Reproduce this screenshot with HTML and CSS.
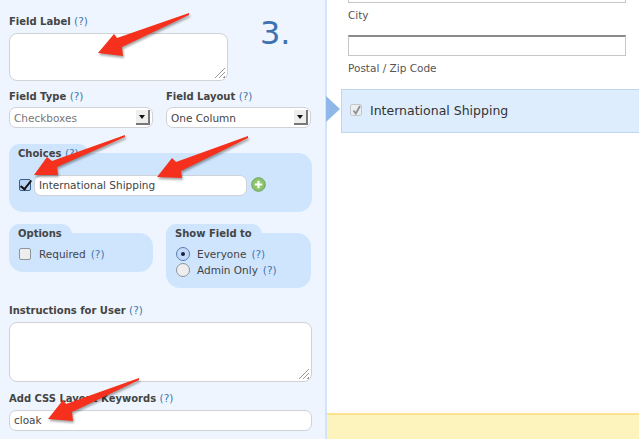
FILE: index.html
```html
<!DOCTYPE html>
<html lang="en">
<head>
	<meta charset="UTF-8">
	<title>Field Settings</title>
	<link rel="stylesheet" href="styles.css">
</head>
<body>
	<div id="page">
		<div class="side">
			<div class="top_row">
				<div class="label_block">
					<div class="lab">Field Label <span class="help">(?)</span></div>
					<div class="area area_short"><span class="grip"></span></div>
				</div>
				<div class="step">3.</div>
			</div>
			<div class="two_col selects">
				<div class="col">
					<div class="lab">Field Type <span class="help">(?)</span></div>
					<div class="sel muted">Checkboxes<span class="sel_btn"></span></div>
				</div>
				<div class="col">
					<div class="lab">Field Layout <span class="help">(?)</span></div>
					<div class="sel">One Column<span class="sel_btn"></span></div>
				</div>
			</div>
			<div class="group choices">
				<div class="tab">Choices <span class="help">(?)</span></div>
				<div class="box choice_row">
					<span class="check on"></span>
					<div class="txt choice_txt">International Shipping</div>
					<svg class="plus" width="15" height="15" viewBox="0 0 15 15">
						<circle cx="7.5" cy="7.5" r="6.8" fill="#8cc46c" stroke="#6ba254"/>
						<path d="M7.5 3.8v7.4M3.8 7.5h7.4" stroke="#fff" stroke-width="2.2"/>
					</svg>
				</div>
			</div>
			<div class="two_col opts">
				<div class="group col">
					<div class="tab">Options</div>
					<div class="box">
						<div class="opt"><span class="check"></span>Required <span class="help">(?)</span></div>
					</div>
				</div>
				<div class="group col">
					<div class="tab">Show Field to</div>
					<div class="box">
						<div class="opt"><span class="radio on"></span>Everyone <span class="help">(?)</span></div>
						<div class="opt"><span class="radio"></span>Admin Only <span class="help">(?)</span></div>
					</div>
				</div>
			</div>
			<div class="lab instr">Instructions for User <span class="help">(?)</span></div>
			<div class="area area_tall"><span class="grip"></span></div>
			<div class="lab css_lab">Add CSS Layout Keywords <span class="help">(?)</span></div>
			<div class="txt">cloak</div>
		</div>
		<div class="main">
			<div class="main_fields">
				<div class="plain_input first"></div>
				<div class="sub">City</div>
				<div class="plain_input"></div>
				<div class="sub">Postal / Zip Code</div>
			</div>
			<div class="active_row">
				<span class="gray_check">
					<svg width="11" height="11" viewBox="0 0 11 11"><path d="M2.5 5.5l2.3 3L9 1" fill="none" stroke="#8d9299" stroke-width="1.8"/></svg>
				</span>
				International Shipping
			</div>
			<div class="spacer"></div>
			<div class="foot"></div>
		</div>

		<!-- red arrows drawn on top of the form -->
		<svg class="arrows" width="639" height="439" viewBox="0 0 639 439">
			<polygon points="189,13 117,38 114,34 98,53 123,56 122,47 189,15"/>
			<polygon points="125,135 52,161 47,157 34,175 58,175 57,167 125,137"/>
			<polygon points="248,136 176,162 172,158 157,177 182,178 181,171 248,138"/>
			<polygon points="139,378 66,404 63,400 48,419 73,421 72,412 139,380"/>
		</svg>
	</div>
</body>
</html>
```

FILE: styles.css
```css
*{
	margin:0;
	padding:0;
	box-sizing:border-box;
}
body{
	background-color:#fff;
	font-family:"DejaVu Sans",sans-serif;
	font-size:10.5px;
	color:#444;
}
#page{
	display:flex;
	position:relative;
	overflow:hidden;
	width:639px;
	height:439px;
}
.side{
	width:327px;
	height:439px;
	padding:15px 13px 0 9px;
	flex:none;
	background-color:#eef5fe;
	border-right:2px solid #d3e4fa;
}
.lab{
	height:13px;
	font-weight:bold;
	font-size:10px;
	line-height:13px;
	color:#444;
}
.help{
	font-weight:normal;
	font-size:10.5px;
	color:#3f75ad;
}
.top_row{
	display:flex;
}
.label_block{
	width:219px;
}
.label_block .lab{
	margin-bottom:5px;
}
.step{
	margin:-2px 0 0 32px;
	font-size:32px;
	line-height:40px;
	color:#3c72b0;
}
.area{
	position:relative;
	border:1px solid #cfd2d6;
	border-radius:8px;
	background-color:#fff;
}
.area_short{
	height:48px;
}
.area_tall{
	height:60px;
	margin-top:5px;
}
.grip{
	position:absolute;
	right:2px;
	bottom:2px;
	width:11px;
	height:11px;
	background:repeating-linear-gradient(135deg,transparent 0,transparent 2px,#999 2px,#999 3px);
	clip-path:polygon(100% 0,100% 100%,0 100%);
}
.two_col{
	display:flex;
	gap:13px;
}
.two_col .col{
	width:145px;
}
.two_col .col:first-child{
	width:144px;
}
.selects{
	margin-top:9px;
}
.selects .lab{
	margin-bottom:4px;
}
.sel{
	display:flex;
	align-items:center;
	justify-content:space-between;
	height:21px;
	padding:0 2px 0 4px;
	border:1px solid #cfd2d6;
	border-radius:7px;
	background-color:#fff;
	font-size:10.5px;
}
.muted{
	color:#777;
}
.sel_btn{
	position:relative;
	width:14px;
	height:15px;
	background-color:#eee;
	border-right:2px solid #777;
	border-bottom:2px solid #777;
}
.sel_btn::after{
	content:'';
	position:absolute;
	left:3px;
	top:5px;
	border-top:4px solid #111;
	border-left:3px solid transparent;
	border-right:3px solid transparent;
}
.group{
	display:block;
}
.tab{
	width:max-content;
	height:21px;
	margin-bottom:-12px;
	padding:3px 10px 0 9px;
	border-radius:10px 10px 0 0;
	background-color:#cfe5fd;
	font-weight:bold;
	font-size:10px;
	line-height:13px;
	color:#444;
}
.box{
	padding:11px 9px 0 11px;
	border-radius:14px;
	background-color:#cfe5fd;
}
.choices{
	margin-top:16px;
}
.choice_row{
	display:flex;
	align-items:flex-start;
	height:59px;
	padding:22px 0 0 10px;
}
.check{
	display:inline-block;
	flex:none;
	position:relative;
	width:12px;
	height:12px;
	margin-right:3px;
	border:1px solid #8f959c;
	border-radius:2px;
	background-color:#eee;
}
.check.on{
	margin-top:4px;
	margin-right:3px;
	border-color:#3a5f8e;
	background-color:#b9d3f1;
}
.check.on::after{
	content:'';
	position:absolute;
	left:3px;
	top:-2px;
	width:4px;
	height:10px;
	border-right:2px solid #111;
	border-bottom:2px solid #111;
	transform:rotate(38deg);
}
.txt{
	height:21px;
	padding-left:4px;
	border:1px solid #cfd2d6;
	border-radius:7px;
	background-color:#fff;
	font-size:10.5px;
	line-height:19px;
	color:#444;
}
.choice_txt{
	width:213px;
}
.plus{
	margin:2px 0 0 4px;
}
.opts{
	margin-top:12px;
}
.opts .box{
	padding-top:13px;
	padding-bottom:10px;
}
.opts .col:first-child .box{
	height:39px;
}
.opts .col:last-child .box{
	height:55px;
}
.opt{
	display:flex;
	align-items:center;
	gap:5px;
	height:16px;
	margin-left:-1px;
}
.opt .check{
	margin-right:3px;
}
.radio{
	position:relative;
	flex:none;
	width:14px;
	height:14px;
	margin-right:2px;
	border:1px solid #8f959c;
	border-radius:50%;
	background-color:#eee;
}
.radio.on{
	border-color:#5a7fae;
	background-color:#c3dafa;
}
.radio.on::after{
	content:'';
	position:absolute;
	left:4px;
	top:4px;
	width:4px;
	height:4px;
	border-radius:50%;
	background-color:#16233a;
}
.instr{
	margin-top:16px;
}
.css_lab{
	margin:10px 0 5px;
}
.main{
	display:flex;
	flex-direction:column;
	flex:1;
	height:439px;
}
.main_fields{
	padding-left:21px;
	padding-right:13px;
}
.plain_input{
	height:21px;
	border:1px solid #c6c6c6;
	border-top:2px solid #8a8a8a;
	background-color:#fff;
}
.plain_input.first{
	height:3px;
	border-top:0;
}
.sub{
	height:32px;
	padding-top:6px;
	line-height:13px;
	color:#555;
}
.active_row{
	display:flex;
	position:relative;
	align-items:center;
	height:44px;
	margin:1px 0 0 14px;
	padding:0 0 2px 8px;
	background-color:#deedfd;
	border:1px solid #bfd6f1;
	border-right:0;
	font-size:12.5px;
	color:#333;
}
.active_row::before{
	content:'';
	position:absolute;
	left:-16px;
	top:6px;
	border-left:14px solid #8fb8e8;
	border-top:13px solid transparent;
	border-bottom:13px solid transparent;
}
.gray_check{
	display:block;
	width:12px;
	height:12px;
	margin-right:8px;
	border:1px solid #c4c8cd;
	border-radius:2px;
	background-color:#eceef0;
}
.gray_check svg{
	display:block;
}
.spacer{
	flex:1;
}
.foot{
	height:26px;
	background-color:#fdf3bd;
	border-top:2px solid #fde38f;
}
.arrows{
	position:absolute;
	left:0;
	top:0;
	fill:#f5301c;
	filter:drop-shadow(1px 2px 1px rgba(0,0,0,.35));
}
```
